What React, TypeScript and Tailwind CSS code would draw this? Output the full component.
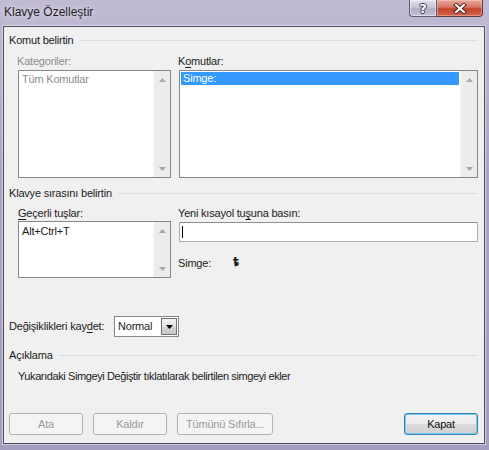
import type { ReactNode } from 'react'

function Arrow({ down = false, color = '#a6a6a6' }: { down?: boolean; color?: string }) {
  return (
    <svg width="7" height="4" viewBox="0 0 7 4">
      <polygon points={down ? '0,0 7,0 3.5,4' : '3.5,0 7,4 0,4'} fill={color} />
    </svg>
  )
}

function ScrollBar() {
  return (
    <div className="flex w-[17px] flex-col justify-between border-l border-[#f7f7f7] bg-[#ececec]">
      <div className="flex h-[17px] items-center justify-center">
        <Arrow />
      </div>
      <div className="flex h-[17px] items-center justify-center">
        <Arrow down />
      </div>
    </div>
  )
}

function ListBox({ className, children }: { className: string; children?: ReactNode }) {
  return (
    <div className={`flex border border-[#828790] bg-white ${className}`}>
      <div className="flex-1">{children}</div>
      <ScrollBar />
    </div>
  )
}

function GroupHeading({ title }: { title: string }) {
  return (
    <div className="flex items-center gap-[6px]">
      <span>{title}</span>
      <div className="h-px flex-1 bg-[#d5dfe5]" />
    </div>
  )
}

function Key({ children }: { children: ReactNode }) {
  return <span className="underline underline-offset-[2px]">{children}</span>
}

function DialogButton({ label, width, disabled = false }: { label: string; width: string; disabled?: boolean }) {
  if (disabled) {
    return (
      <button
        disabled
        className={`flex h-[22px] items-center justify-center rounded-[3px] border border-[#adb2b5] bg-[#f4f4f4] text-[#9a9a9a] ${width}`}
      >
        {label}
      </button>
    )
  }
  return (
    <button
      className={`flex h-[22px] items-center justify-center rounded-[3px] border border-[#3c7fb1] bg-[linear-gradient(180deg,#f2f2f2_0%,#ebebeb_50%,#dddddd_51%,#cfcfcf_100%)] text-[#111] shadow-[inset_0_0_0_1px_#6ecbf4] ${width}`}
    >
      {label}
    </button>
  )
}

function TitleBar() {
  return (
    <div className="flex h-[26px] items-start">
      <span className="pl-[4px] pt-[6px] text-[12px] tracking-normal text-[#1e1e1e] [text-shadow:0_0_6px_rgba(255,255,255,0.9)]">
        Klavye Özelleştir
      </span>
      <div className="ml-auto mr-[6px] flex">
        <div className="flex h-[17px] w-[28px] items-center justify-center rounded-bl-[4px] border border-t-0 border-[#5e5a74] bg-[linear-gradient(180deg,#e3e0ec_0%,#c9c5d8_45%,#b3adc8_55%,#c6c1d8_100%)] shadow-[inset_0_0_0_1px_rgba(255,255,255,0.45)]">
          <span className="font-['DejaVu_Sans',sans-serif] text-[13px] font-bold leading-none text-white [text-shadow:1px_0_0_#3c3a4c,-1px_0_0_#3c3a4c,0_1px_0_#3c3a4c,0_-1px_0_#3c3a4c]">
            ?
          </span>
        </div>
        <div className="flex h-[17px] w-[46px] items-center justify-center rounded-br-[4px] border border-l-0 border-t-0 border-[#5e3a3a] bg-[linear-gradient(180deg,#e8a89c_0%,#d87565_45%,#c4432b_55%,#d4634c_100%)] shadow-[inset_0_0_0_1px_rgba(255,220,210,0.4)]">
          <svg width="14" height="11" viewBox="0 0 14 11">
            <path d="M3 2 L11 9 M11 2 L3 9" stroke="#4a2420" strokeWidth="4" strokeLinecap="square" />
            <path d="M3 2 L11 9 M11 2 L3 9" stroke="#ffffff" strokeWidth="2" strokeLinecap="square" />
          </svg>
        </div>
      </div>
    </div>
  )
}

export default function App() {
  return (
    <div className="flex h-[450px] w-[489px] flex-col overflow-hidden bg-[linear-gradient(180deg,#c0bad4_0%,#aba4c6_40%,#a59ec1_100%)] font-['Liberation_Sans',Arial,sans-serif] text-[11px] leading-[13px] tracking-[-0.2px] text-[#1b1b1b]">
      <TitleBar />

      <div className="ml-[3px] mr-[4px] flex h-[418px] flex-col border border-[#4d4a5e] bg-[#f0f0f0] pl-[5px] pr-[6px] shadow-[0_0_0_1px_rgba(255,255,255,0.45)]">
        <div className="mt-[7px]">
          <GroupHeading title="Komut belirtin" />
        </div>

        <div className="mt-[8px] grid grid-cols-[153px_299px] gap-x-[8px] pl-[9px]">
          <div className="flex flex-col">
            <span className="-ml-px text-[#8d8d8d]">Kategoriler:</span>
            <ListBox className="mt-[2px] h-[108px]">
              <div className="pl-[3px] pt-[2px] text-[#8d8d8d]">Tüm Komutlar</div>
            </ListBox>
          </div>
          <div className="flex flex-col">
            <span className="-ml-px">
              K<Key>o</Key>mutlar:
            </span>
            <ListBox className="mt-[2px] h-[108px]">
              <div className="ml-px mr-px mt-px h-[13px] bg-[#3399ff] pl-[2px] text-white">Simge:</div>
            </ListBox>
          </div>
        </div>

        <div className="mt-[9px]">
          <GroupHeading title="Klavye sırasını belirtin" />
        </div>

        <div className="mt-[7px] grid grid-cols-[153px_299px] gap-x-[8px] pl-[9px]">
          <div className="flex flex-col">
            <span>
              <Key>G</Key>eçerli tuşlar:
            </span>
            <ListBox className="mt-px h-[57px]">
              <div className="pl-[3px] pt-[3px]">Alt+Ctrl+T</div>
            </ListBox>
          </div>
          <div className="flex flex-col">
            <span className="-ml-px">
              Yeni kısayol tu<Key>ş</Key>una basın:
            </span>
            <div className="mt-[2px] flex h-[20px] items-center border border-[#abadb3] border-t-[#8e8f8f] bg-white pl-[2px]">
              <div className="h-[12px] w-px bg-black" />
            </div>
            <div className="mt-[15px] flex items-center">
              <span className="-ml-px w-[55px]">Simge:</span>
              <span className="-mt-[3px] font-['DejaVu_Sans',sans-serif] text-[12px] font-bold">ȶ</span>
            </div>
          </div>
        </div>

        <div className="mt-[38px] flex items-center">
          <span className="w-[105px]">
            Değişiklikleri kay<Key>d</Key>et:
          </span>
          <div className="flex h-[21px] w-[65px] items-stretch border border-[#828790] bg-white">
            <span className="flex flex-1 items-center pl-[3px]">Normal</span>
            <div className="m-px flex w-[16px] items-center justify-center border border-[#707070] bg-[linear-gradient(180deg,#f2f2f2_0%,#e4e4e4_50%,#d2d2d2_51%,#c8c8c8_100%)]">
              <Arrow down color="#000000" />
            </div>
          </div>
        </div>

        <div className="mt-[12px]">
          <GroupHeading title="Açıklama" />
        </div>

        <p className="mt-[8px] pl-[9px] tracking-[-0.4px]">
          Yukarıdaki Simgeyi Değiştir tıklatılarak belirtilen simgeyi ekler
        </p>

        <div className="mb-[8px] mt-auto flex gap-[10px]">
          <DialogButton label="Ata" width="w-[74px]" disabled />
          <DialogButton label="Kaldır" width="w-[74px]" disabled />
          <DialogButton label="Tümünü Sıfırla..." width="w-[96px]" disabled />
          <div className="ml-auto">
            <DialogButton label="Kapat" width="w-[74px]" />
          </div>
        </div>
      </div>
    </div>
  )
}
